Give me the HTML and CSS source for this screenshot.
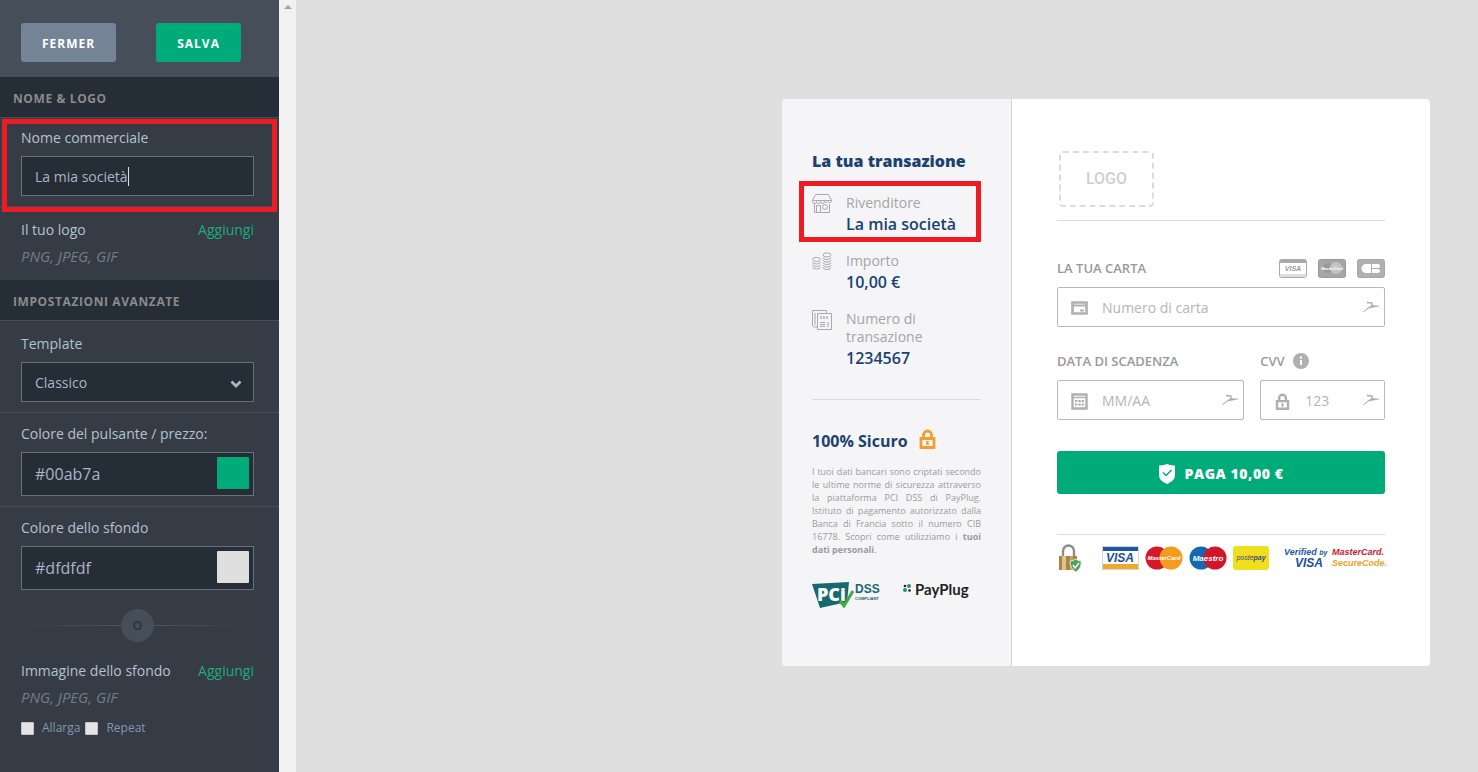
FILE: index.html
```html
<!DOCTYPE html>
<html lang="it">
<head>
  <meta charset="utf-8">
  <title>PayPlug</title>
  <link rel="stylesheet" href="styles.css">
</head>
<body>
<!-- shared shapes -->
<svg class="defs" aria-hidden="true">
  <symbol id="bird" viewBox="0 0 18 12">
    <path d="M1 11 L7 6 L10 4.500 L17 5 L10 6.500 L7 7z" fill="#aaa" stroke="#aaa" stroke-width=".5"/>
    <path d="M5 1.500 L10 2 L10 5" fill="none" stroke="#aaa" stroke-width="1.300"/>
  </symbol>
  <symbol id="padlock" viewBox="0 0 16 20">
    <path d="M4 9 V6 a4 4 0 0 1 8 0 V9" fill="none" stroke="currentColor" stroke-width="2.800"/>
    <path d="M1.500 9.500 h13 v9 h-13z" fill="none" stroke="currentColor" stroke-width="2.800"/>
    <path d="M8 12 v4" stroke="currentColor" stroke-width="2.500"/>
  </symbol>
</svg>

<aside class="sidebar">
  <header class="actions">
    <button type="button" class="btn-close">FERMER</button>
    <button type="button" class="btn-save">SALVA</button>
  </header>

  <h2>NOME &amp; LOGO</h2>
  <section class="group highlight-name">
    <label for="name">Nome commerciale</label>
    <div class="field">
      <input id="name" type="text" value="La mia società">
      <span class="caret"></span>
    </div>
  </section>
  <section class="group upload">
    <div class="row"><span>Il tuo logo</span><a href="#">Aggiungi</a></div>
    <p class="hint">PNG, JPEG, GIF</p>
  </section>

  <h2>IMPOSTAZIONI AVANZATE</h2>
  <section class="group template">
    <label for="template">Template</label>
    <div class="field">
      <select id="template"><option>Classico</option></select>
      <svg class="chevron" width="12" height="8" viewBox="0 0 12 8"><path d="M1.500 1.500 L6 6 L10.500 1.500" fill="none" stroke="#a9b6c6" stroke-width="2.800"/></svg>
    </div>
  </section>
  <section class="group colors">
    <label for="btn_color">Colore del pulsante / prezzo:</label>
    <div class="field">
      <input id="btn_color" type="text" value="#00ab7a">
      <span class="swatch green"></span>
    </div>
  </section>
  <section class="group colors last">
    <label for="bg_color">Colore dello sfondo</label>
    <div class="field">
      <input id="bg_color" type="text" value="#dfdfdf">
      <span class="swatch grey"></span>
    </div>
    <div class="or"><span>O</span></div>
    <div class="row"><span>Immagine dello sfondo</span><a href="#">Aggiungi</a></div>
    <p class="hint">PNG, JPEG, GIF</p>
    <div class="checks">
      <input id="stretch" type="checkbox"><label for="stretch">Allarga</label>
      <input id="repeat" type="checkbox"><label for="repeat">Repeat</label>
    </div>
  </section>
</aside>

<div class="scrollbar"><span></span></div>

<main>
  <div class="card">
    <div class="summary">
      <h3>La tua transazione</h3>
      <div class="item highlight-seller">
        <svg width="20" height="20" viewBox="0 0 20 20" fill="none" stroke="#aaa">
          <path d="M3.500 .500 h13 l3 6 h-19z M.500 6.500 v1 a2 2 0 0 0 4 0 a2 2 0 0 0 4 0 a2 2 0 0 0 4 0 a2 2 0 0 0 3.500 0 a2 2 0 0 0 3.500 0 v-1 M2.500 10 v8.500 h15 V10 M4.500 18 v-6.500 h4 V18"/>
          <circle cx="13" cy="13" r="2.500"/>
        </svg>
        <div><span class="name">Rivenditore</span><span class="value">La mia società</span></div>
      </div>
      <div class="item">
        <svg width="20" height="20" viewBox="0 0 20 20" fill="none" stroke="#aaa">
          <ellipse cx="4.500" cy="7.500" rx="4" ry="2"/>
          <path d="M.500 10 q0 2 4 2 t4-2 M.500 12.500 q0 2 4 2 t4-2 M.500 15 q0 2 4 2 t4-2"/>
          <ellipse cx="15" cy="3" rx="4" ry="2"/>
          <path d="M11 5.500 q0 2 4 2 t4-2 M11 8 q0 2 4 2 t4-2 M11 10.500 q0 2 4 2 t4-2 M11 13 q0 2 4 2 t4-2 M11 15.500 q0 2 4 2 t4-2"/>
        </svg>
        <div><span class="name">Importo</span><span class="value">10,00 €</span></div>
      </div>
      <div class="item">
        <svg width="20" height="20" viewBox="0 0 20 20" fill="none" stroke="#aaa">
          <path d="M5.500 3.500 h14 v16 h-14z M5.500 17 h-3 q-2 0-2-2 V.500 h14 v3 M3 3 v12 M8 12.500 h5 M8 14.500 h5 M8 16.500 h5 M16 12 v5"/>
          <path d="M8 7.500 h9" stroke-width="3" stroke-dasharray="2 1" stroke="#c4c4c4"/>
        </svg>
        <div><span class="name">Numero di transazione</span><span class="value">1234567</span></div>
      </div>
      <hr>
      <h4>100% Sicuro <svg class="lock-orange" width="17" height="20"><use href="#padlock"/></svg></h4>
      <p class="legal">I tuoi dati bancari sono criptati secondo le ultime norme di sicurezza attraverso la piattaforma PCI DSS di PayPlug. Istituto di pagamento autorizzato dalla Banca di Francia sotto il numero CIB 16778. Scopri come utilizziamo i <b>tuoi dati personali</b>.</p>
      <div class="partners">
        <svg width="69" height="28" viewBox="0 0 69 28">
          <path d="M0 2 L37 0 L35 20 L8 26z" fill="#17696f"/>
          <text class="pci" x="5" y="19">PCi</text>
          <path d="M28 19 l4 5 l9-15" fill="none" stroke="#3cae49" stroke-width="3"/>
          <text class="dss" x="43" y="11">DSS</text>
          <text class="compliant" x="43" y="18">COMPLIANT</text>
        </svg>
        <svg width="68" height="20" viewBox="0 0 68 20">
          <g fill="#2a8f6a"><circle cx="6" cy="4" r="2"/><circle cx="2" cy="8" r="2"/></g>
          <g fill="#222"><circle cx="2" cy="4" r="1.300"/><circle cx="6.500" cy="8.500" r="1.300"/></g>
          <text class="payplug" x="12" y="13">PayPlug</text>
        </svg>
      </div>
    </div>

    <form class="payment">
      <div class="logo">LOGO</div>
      <hr>
      <div class="label-row">
        <label for="card_number">LA TUA CARTA</label>
        <span class="mini-cards">
          <svg width="28" height="19" viewBox="0 0 28 19">
            <rect x=".5" y=".5" width="27" height="18" rx="2" fill="#fff" stroke="#aaa"/>
            <path d="M1 1 h26 v3 H1z" fill="#aaa"/><path d="M1 15 h26 v3 H1z" fill="#ddd"/>
            <text class="mini-visa" x="14" y="12">VISA</text>
          </svg>
          <svg width="28" height="19" viewBox="0 0 28 19">
            <rect x=".5" y=".5" width="27" height="18" rx="2" fill="#a6a6a6" stroke="#999"/>
            <circle cx="10" cy="9" r="5" fill="#999"/><circle cx="18" cy="9" r="6" fill="#c4c4c4"/>
            <text class="mini-master" x="14" y="11">MasterCard</text>
          </svg>
          <svg width="28" height="19" viewBox="0 0 28 19">
            <rect x=".5" y=".5" width="27" height="18" rx="2" fill="#b0b0b0" stroke="#a6a6a6"/>
            <path d="M14 5 H9 a4.500 4.500 0 0 0 0 9 h5z M15 5 h6 a2 2 0 0 1 0 4 h-6z M15 10 h6 a2 2 0 0 1 0 4 h-6z" fill="#fff"/>
          </svg>
        </span>
      </div>
      <div class="box">
        <svg width="17" height="14" viewBox="0 0 17 14"><path d="M1.500 1.500 h14 v11 h-14z" fill="none" stroke="#b0b0b3" stroke-width="2.600"/><path d="M1 4.500 h15" stroke="#b0b0b3" stroke-width="2"/><path d="M9 9.500 h4" stroke="#b0b0b3" stroke-width="2"/></svg>
        <input id="card_number" type="text" placeholder="Numero di carta">
        <svg class="bird" width="18" height="12"><use href="#bird"/></svg>
      </div>

      <div class="columns">
        <div class="expiry">
          <div class="label-row"><label for="expiry">DATA DI SCADENZA</label></div>
          <div class="box">
            <svg width="17" height="17" viewBox="0 0 17 17"><path d="M1.500 1.500 h14 v14 h-14z" fill="none" stroke="#b0b0b3" stroke-width="2.400"/><path d="M1 4.500 h15" stroke="#b0b0b3" stroke-width="1.500"/><path d="M4 8 h9 M4 11.500 h9" stroke="#b0b0b3" stroke-width="2" stroke-dasharray="2.400 1"/></svg>
            <input id="expiry" type="text" placeholder="MM/AA">
            <svg class="bird" width="18" height="12"><use href="#bird"/></svg>
          </div>
        </div>
        <div class="cvv">
          <div class="label-row">
            <label for="cvv">CVV</label>
            <svg width="16" height="16" viewBox="0 0 16 16"><circle cx="8" cy="8" r="8" fill="#b0b0b0"/><path d="M8 7 v5" stroke="#fff" stroke-width="2"/><circle cx="8" cy="4.500" r="1.200" fill="#fff"/></svg>
          </div>
          <div class="box">
            <svg class="lock-grey" width="17" height="17"><use href="#padlock"/></svg>
            <input id="cvv" type="text" placeholder="123">
            <svg class="bird" width="18" height="12"><use href="#bird"/></svg>
          </div>
        </div>
      </div>

      <button type="button" class="pay">
        <svg width="16" height="20" viewBox="0 0 16 20"><path d="M0 1.500 Q4 1.500 8 0 Q12 1.500 16 1.500 V11 Q16 17 8 20 Q0 17 0 11z" fill="#fff"/><path d="M4 8.500 l3 3 l5.500-5.500" fill="none" stroke="#00ab7a" stroke-width="1.500"/></svg>
        PAGA 10,00 €
      </button>
      <hr>
      <div class="brands">
        <svg class="guard" width="24" height="28" viewBox="0 0 24 28">
          <path d="M6 12 V7 a5.500 5.500 0 0 1 11 0 V12" fill="none" stroke="#8c8c88" stroke-width="2.400"/>
          <path d="M2 12 h18 v14 H2z" fill="#a98544"/><path d="M5 12 h4 v14 H5z" fill="#dcc48c"/><path d="M13 12 h3 v14 h-3z" fill="#c5a562"/>
          <path d="M13 17 Q16 17 19 15 Q21 17 24 17 Q25 24 19 28 Q13 25 13 17z" fill="#54a05b" stroke="#dfe9dc"/>
          <path d="M16 21 l2 3 l4-5" fill="none" stroke="#fff" stroke-width="1.500"/>
        </svg>
        <svg width="37" height="24" viewBox="0 0 37 24">
          <rect x=".5" y=".5" width="36" height="23" fill="#fff" stroke="#cfd6e0"/>
          <path d="M1 1 h35 v4 H1z" fill="#1c5a9c"/><path d="M1 18 h35 v5 H1z" fill="#f0a72c"/>
          <text class="visa" x="18" y="16">VISA</text>
        </svg>
        <svg width="38" height="24" viewBox="0 0 38 24">
          <circle cx="12" cy="12" r="11.500" fill="#d5182a"/><circle cx="26" cy="12" r="11.500" fill="#f59c1f"/>
          <text class="master" x="19" y="14">MasterCard</text>
        </svg>
        <svg width="38" height="24" viewBox="0 0 38 24">
          <circle cx="12" cy="12" r="11.500" fill="#1667b2"/><circle cx="26" cy="12" r="11.500" fill="#d3152a"/>
          <text class="maestro" x="19" y="15">Maestro</text>
        </svg>
        <svg width="36" height="24" viewBox="0 0 36 24">
          <rect width="36" height="24" rx="3" fill="#f0df1e"/>
          <text class="postepay" x="18" y="14">poste<tspan class="bold">pay</tspan></text>
        </svg>
        <svg class="verified" width="44" height="24" viewBox="0 0 44 24">
          <text class="by" x="0" y="9">Verified <tspan class="small">by</tspan></text>
          <text class="visa" x="25" y="21">VISA</text>
        </svg>
        <svg width="54" height="24" viewBox="0 0 54 24">
          <text class="mc-name" x="0" y="9">MasterCard.</text>
          <text class="mc-code" x="0" y="20">SecureCode.</text>
        </svg>
      </div>
    </form>
  </div>
</main>
</body>
</html>
```
FILE: styles.css
```css
* {
  box-sizing: border-box;
}
body {
  margin: 0;
  min-height: 100vh;
  display: flex;
  background: #dfdfdf;
  font-family: "Open Sans", sans-serif;
  font-size: 14px;
  line-height: 20px;
}
h2, h3, h4, p {
  margin: 0;
}
input, select, button {
  font-family: inherit;
  font-size: inherit;
}
a {
  color: #1fab78;
  text-decoration: none;
}
.defs {
  position: absolute;
  width: 0;
  height: 0;
}

/* sidebar */
.sidebar {
  flex: 0 0 279px;
  background: #353c46;
  color: #b4c1d0;
}
.actions {
  display: flex;
  gap: 40px;
  padding: 23px 21px 15px;
  background: #454e59;
}
.actions button {
  height: 39px;
  padding: 2px 21px 0;
  border: 0;
  border-radius: 3px;
  color: #fff;
  font-size: 12px;
  font-weight: bold;
  letter-spacing: 1px;
}
.actions .btn-close {
  background: #758396;
}
.actions .btn-save {
  background: #00ab7a;
}
.sidebar h2 {
  padding: 12px 13px 8px;
  border-bottom: 1px solid #454e59;
  background: #252d36;
  color: #8a8b8c;
  font-size: 12px;
  letter-spacing: 0.05em;
}
.group {
  padding: 10px 25px 10px 21px;
  border-bottom: 1px solid #454e59;
}
.group > label {
  display: block;
  margin-bottom: 8px;
}
.group.template {
  padding-top: 13px;
}
.group.colors {
  padding-top: 11px;
}
.group.upload, .group.last {
  border-bottom: 0;
}
.group.upload {
  padding-top: 13px;
  padding-bottom: 14px;
}
.field {
  position: relative;
}
.field input, .field select {
  display: block;
  width: 100%;
  height: 40px;
  padding: 0 13px;
  border: 1px solid #67717e;
  border-radius: 0;
  background: #252d36;
  color: #a9b6c6;
  outline: none;
  appearance: none;
}
.colors .field input {
  height: 44px;
  font-size: 16px;
}
.caret {
  position: absolute;
  left: 107px;
  top: 11px;
  width: 1px;
  height: 19px;
  background: #d5dce4;
}
.chevron {
  position: absolute;
  right: 12px;
  top: 18px;
}
.swatch {
  position: absolute;
  right: 5px;
  top: 5px;
  width: 32px;
  height: 32px;
  border-radius: 1px;
}
.green {
  background: #00ab7a;
}
.grey {
  background: #dfdfdf;
}
.row {
  display: flex;
  justify-content: space-between;
}
.hint {
  margin-top: 6px;
  color: #727c89;
  font-size: 15px;
  font-style: italic;
}
.or {
  display: flex;
  align-items: center;
  margin: 19px 0;
  color: #29313a;
}
.or::before, .or::after {
  content: "";
  flex: 1;
  height: 1px;
  background: linear-gradient(to right, #353c46, #4c5560);
}
.or::after {
  background: linear-gradient(to left, #353c46, #4c5560);
}
.or span {
  width: 33px;
  border-radius: 50%;
  background: #454e59;
  font-size: 12px;
  font-weight: 600;
  line-height: 33px;
  text-align: center;
}
.checks {
  display: flex;
  align-items: center;
  margin-top: 11px;
  color: #8495ae;
  font-size: 12px;
}
.checks input {
  appearance: none;
  width: 13px;
  height: 13px;
  margin: 0 8px 0 0;
  border: 1px solid #c4c4c4;
  border-radius: 1px;
  background: #e4e4e4;
}
.checks label {
  margin-right: 5px;
}

/* red frames */
.highlight-name, .highlight-seller {
  position: relative;
}
.highlight-name::after, .highlight-seller::after {
  content: "";
  position: absolute;
  border: 5px solid #ed1c24;
  pointer-events: none;
}
.highlight-name::after {
  inset: 1px 2px -6px;
}
.highlight-seller::after {
  inset: -13px 0 -6px -13px;
}

.scrollbar {
  flex: 0 0 17px;
  padding-top: 5px;
  background: #f1f1f1;
}
.scrollbar span {
  display: block;
  width: 8px;
  margin: 0 auto;
  border: 4px solid transparent;
  border-top: 0;
  border-bottom-color: #a3a3a3;
}

/* payment card */
main {
  flex: 1;
  padding: 99px 48px 48px;
}
.card {
  display: flex;
  max-width: 648px;
  min-height: 567px;
  margin-left: auto;
  border-radius: 4px;
  background: #fff;
}
.summary {
  flex: 0 0 230px;
  padding: 50px 30px;
  border-right: 1px solid #d5d5d5;
  border-radius: 4px 0 0 4px;
  background: #f5f5f7;
  color: #1b4271;
}
hr {
  margin: 0;
  border: 0;
  border-top: 1px solid #dcdcdc;
}
.summary h3 {
  margin-bottom: 21px;
  font-size: 16px;
  font-weight: 800;
  line-height: 24px;
  white-space: nowrap;
}
.item {
  display: flex;
  gap: 14px;
  margin-bottom: 16px;
}
.item svg {
  flex: none;
}
.item span {
  display: block;
}
.name {
  color: #a5a5a5;
  line-height: 18px;
}
.value {
  font-size: 16px;
  font-weight: 600;
  line-height: 24px;
}
.summary hr {
  margin: 29px 0;
}
.summary h4 {
  display: flex;
  align-items: center;
  gap: 11px;
  margin-bottom: 12px;
  font-size: 16px;
  line-height: 24px;
}
.lock-orange {
  margin-bottom: 4px;
  color: #f0a02c;
}
.legal {
  color: #9b9b9b;
  font-size: 9px;
  line-height: 13px;
  text-align: justify;
}
.partners {
  display: flex;
  gap: 22px;
  margin-top: 26px;
}
.partners svg {
  flex: none;
  overflow: visible;
}
.pci {
  fill: #fff;
  font-size: 18px;
  font-weight: 800;
}
.dss, .compliant {
  fill: #17696f;
  font-family: "Liberation Sans", sans-serif;
  font-size: 12px;
  font-weight: bold;
}
.compliant {
  font-size: 4px;
}
.payplug {
  fill: #222;
  font-family: Lato, sans-serif;
  font-size: 15px;
  font-weight: bold;
}

.payment {
  flex: 1;
  min-width: 0;
  padding: 52px 45px 48px;
  color: #999;
}
.logo {
  width: 95px;
  height: 56px;
  margin: 0 2px 13px;
  border: 2px dashed #dcdcdc;
  border-radius: 4px;
  color: #cfcfcf;
  font-family: Roboto, sans-serif;
  font-size: 16px;
  font-weight: 500;
  line-height: 52px;
  text-align: center;
}
.label-row {
  display: flex;
  align-items: center;
  gap: 8px;
  height: 20px;
  margin-bottom: 9px;
  font-size: 13px;
  font-weight: 600;
}
.payment > .label-row {
  justify-content: space-between;
  margin-top: 37px;
}
.mini-cards {
  display: flex;
  gap: 11px;
}
.box {
  display: flex;
  align-items: center;
  height: 40px;
  padding: 2px 4px 0 13px;
  border: 1px solid #b9b9b9;
  border-radius: 2px;
}
.box svg {
  flex: none;
}
.box input {
  flex: 1;
  width: 0;
  min-width: 0;
  padding: 0 0 2px 14px;
  border: 0;
  outline: none;
  background: none;
}
.box input::placeholder {
  color: #b5b5b5;
}
.bird {
  align-self: flex-start;
  margin-top: 11px;
}
.lock-grey {
  color: #b0b0b3;
}
.columns {
  display: flex;
  gap: 16px;
  margin: 24px 0 31px;
}
.expiry {
  flex: 3;
  min-width: 0;
}
.cvv {
  flex: 2;
  min-width: 0;
}
.pay {
  display: flex;
  align-items: center;
  justify-content: center;
  gap: 10px;
  width: 100%;
  height: 43px;
  margin-bottom: 40px;
  padding: 2px 0 0;
  border: 0;
  border-radius: 3px;
  background: #00ab7a;
  color: #fff;
  font-size: 14px;
  font-weight: 800;
  letter-spacing: 0.04em;
}
.brands {
  display: flex;
  align-items: center;
  gap: 6px;
  margin-top: 9px;
}
.brands svg {
  flex: none;
  overflow: visible;
}
.guard {
  margin-right: 15px;
}
.verified {
  margin: 0 -2px 0 9px;
}
.brands text, .mini-cards text {
  font-family: "Liberation Sans", sans-serif;
  font-style: italic;
  font-weight: bold;
}
.visa, .master, .maestro, .postepay, .mini-visa, .mini-master {
  text-anchor: middle;
}
.visa {
  fill: #1c4f96;
  font-size: 12px;
}
.master, .maestro {
  fill: #fff;
  font-size: 6px;
}
.maestro {
  font-size: 8px;
}
.brands .postepay {
  fill: #3b4b7a;
  font-size: 7px;
  font-weight: normal;
}
.bold {
  font-weight: bold;
}
.by {
  fill: #24599b;
  font-size: 9px;
}
.small {
  font-size: 7px;
}
.mc-name {
  fill: #c9202f;
  font-size: 9px;
}
.mc-code {
  fill: #f0a02c;
  font-size: 9px;
}
.mini-visa {
  fill: #999;
  font-size: 7px;
}
.mini-master {
  fill: #fff;
  font-size: 4px;
}
```
